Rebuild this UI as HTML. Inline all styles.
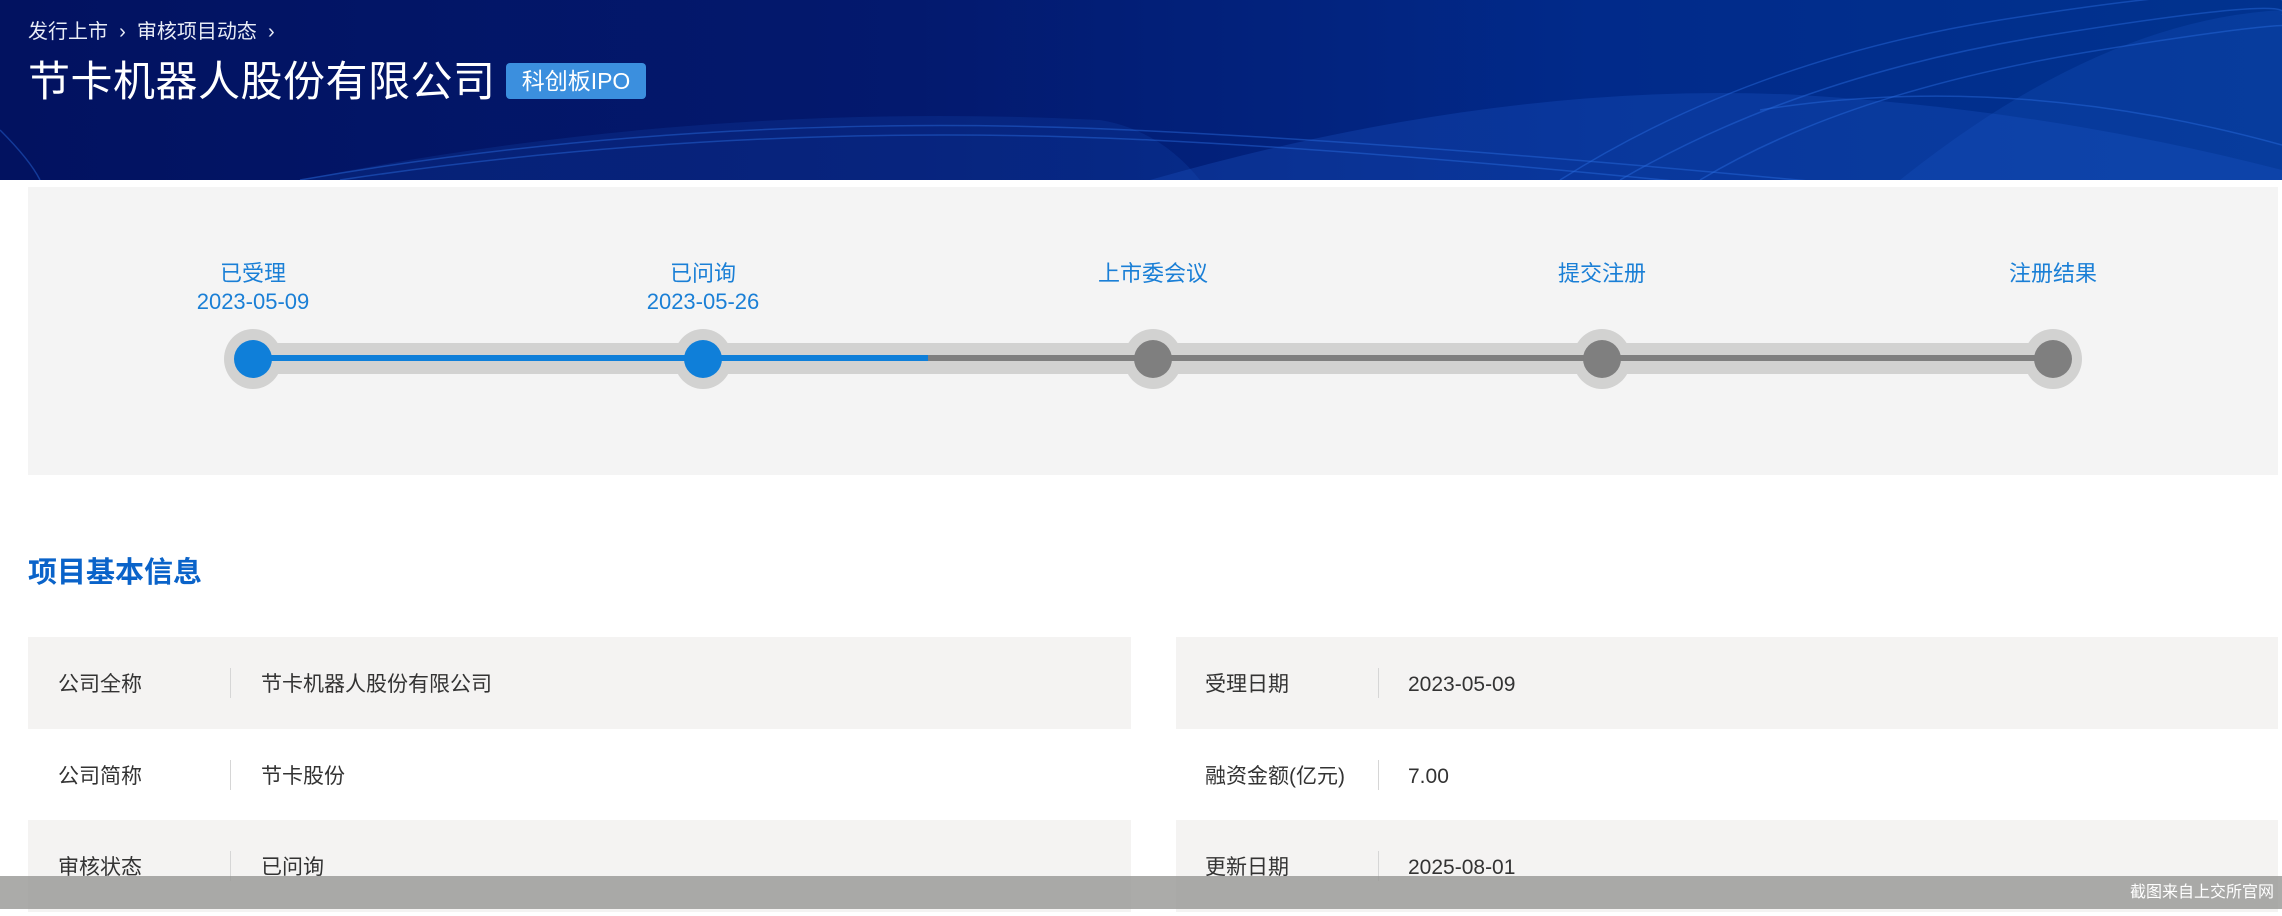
<!DOCTYPE html>
<html><head><meta charset="utf-8"><style>
*{margin:0;padding:0;box-sizing:border-box}
body{width:2282px;height:909px;overflow:hidden;background:#fff;font-family:"Liberation Sans","Noto Sans CJK SC",sans-serif;position:relative}
.hdr{position:absolute;left:0;top:0;width:2282px;height:180px;background:linear-gradient(90deg,#021260 0%,#03196e 40%,#012a8a 70%,#01338f 100%);overflow:hidden}
.bc{position:absolute;left:28px;top:18px;color:#e8ecf6;font-size:20px;line-height:28px}
.ttl{position:absolute;left:28px;top:55px;color:#fff;font-size:42px;line-height:54px;letter-spacing:0.5px}
.badge{position:absolute;left:506px;top:63px;width:140px;height:36px;background:#3b8fde;border-radius:4px;color:#fff;font-size:23px;line-height:36px;text-align:center}
.panel{position:absolute;left:28px;top:187px;width:2250px;height:288px;background:#f4f4f4}
.lab{position:absolute;width:240px;margin-left:-120px;text-align:center;color:#1a7fd6;font-size:22px;line-height:28px}
.track{position:absolute;left:253px;top:343px;width:1800px;height:31px;background:#d2d2d1}
.line{position:absolute;top:355px;height:6px}
.dot{position:absolute;width:58px;height:60px;margin-left:-29px;top:329px;border-radius:50%;background:#d2d2d1}
.in{position:absolute;width:38px;height:38px;margin-left:-19px;top:340px;border-radius:50%}
h2{position:absolute;left:28px;top:555px;font-size:29px;color:#0a63c9;font-weight:bold;line-height:36px}
.row{position:absolute;height:92px;font-size:21px;color:#333;line-height:96px}
.row span{position:absolute}
.sep{position:absolute;top:31px;width:1px;height:30px;background:#d6d6d6}
.ov{position:absolute;left:0;top:876px;width:2282px;height:33px;background:rgba(150,150,148,0.8);color:#fff;font-size:16px;line-height:33px;text-align:right;padding-right:8px}
</style></head><body>
<div class="hdr">
<svg width="2282" height="180" style="position:absolute;left:0;top:0">
<path d="M1150 180 Q 1500 80 1800 95 Q 2050 110 2282 170 L2282 180 Z" fill="#1d57c8" fill-opacity="0.3"/>
<path d="M1900 180 Q 2100 20 2282 10 L2282 180 Z" fill="#1d57c8" fill-opacity="0.25"/>
<path d="M300 180 Q 700 100 1100 120 Q 1160 130 1200 180 Z" fill="#1d57c8" fill-opacity="0.18"/>
<g fill="none" stroke="#2a6de0" stroke-opacity="0.45" stroke-width="1.5">
<path d="M300 180 Q 700 110 1130 130 T 2282 230"/>
<path d="M340 180 Q 740 120 1150 140 T 2282 250"/>
<path d="M1560 180 Q 1750 60 2000 20 T 2282 0"/>
<path d="M1620 180 Q 1800 75 2050 35 T 2282 15"/>
<path d="M1700 180 Q 1850 90 2100 50 T 2282 35"/>
<path d="M1760 110 Q 2010 70 2282 145"/>
<path d="M0 130 Q 30 160 40 180"/>
</g>
</svg>
<div class="bc">发行上市 &nbsp;›&nbsp; 审核项目动态 &nbsp;›</div>
<div class="ttl">节卡机器人股份有限公司</div>
<div class="badge">科创板IPO</div>
</div>
<div class="panel"></div>
<div class="lab" style="left:253px;top:260px">已受理</div>
<div class="lab" style="left:253px;top:288px">2023-05-09</div>
<div class="lab" style="left:703px;top:260px">已问询</div>
<div class="lab" style="left:703px;top:288px">2023-05-26</div>
<div class="lab" style="left:1153px;top:260px">上市委会议</div>
<div class="lab" style="left:1602px;top:260px">提交注册</div>
<div class="lab" style="left:2053px;top:260px">注册结果</div>
<div class="track"></div>
<div class="dot" style="left:253px"></div>
<div class="dot" style="left:703px"></div>
<div class="dot" style="left:1153px"></div>
<div class="dot" style="left:1602px"></div>
<div class="dot" style="left:2053px"></div>
<div class="line" style="left:253px;width:675px;background:#0f7fd9"></div>
<div class="line" style="left:928px;width:1125px;background:#7f7f7f"></div>
<div class="in" style="left:253px;background:#0f7fd9"></div>
<div class="in" style="left:703px;background:#0f7fd9"></div>
<div class="in" style="left:1153px;background:#7f7f7f"></div>
<div class="in" style="left:1602px;background:#7f7f7f"></div>
<div class="in" style="left:2053px;background:#7f7f7f"></div>
<h2>项目基本信息</h2>
<div class="row" style="left:28px;top:637px;width:1103px;background:#f4f3f2"><span style="left:30px">公司全称</span><div class="sep" style="left:202px"></div><span style="left:233px">节卡机器人股份有限公司</span></div>
<div class="row" style="left:28px;top:729px;width:1103px"><span style="left:30px">公司简称</span><div class="sep" style="left:202px"></div><span style="left:233px">节卡股份</span></div>
<div class="row" style="left:28px;top:820px;width:1103px;background:#f4f3f2"><span style="left:30px">审核状态</span><div class="sep" style="left:202px"></div><span style="left:233px">已问询</span></div>
<div class="row" style="left:1176px;top:637px;width:1102px;background:#f4f3f2"><span style="left:29px">受理日期</span><div class="sep" style="left:202px"></div><span style="left:232px">2023-05-09</span></div>
<div class="row" style="left:1176px;top:729px;width:1102px"><span style="left:29px">融资金额(亿元)</span><div class="sep" style="left:202px"></div><span style="left:232px">7.00</span></div>
<div class="row" style="left:1176px;top:820px;width:1102px;background:#f4f3f2"><span style="left:29px">更新日期</span><div class="sep" style="left:202px"></div><span style="left:232px">2025-08-01</span></div>
<div class="ov">截图来自上交所官网</div>
</body></html>
